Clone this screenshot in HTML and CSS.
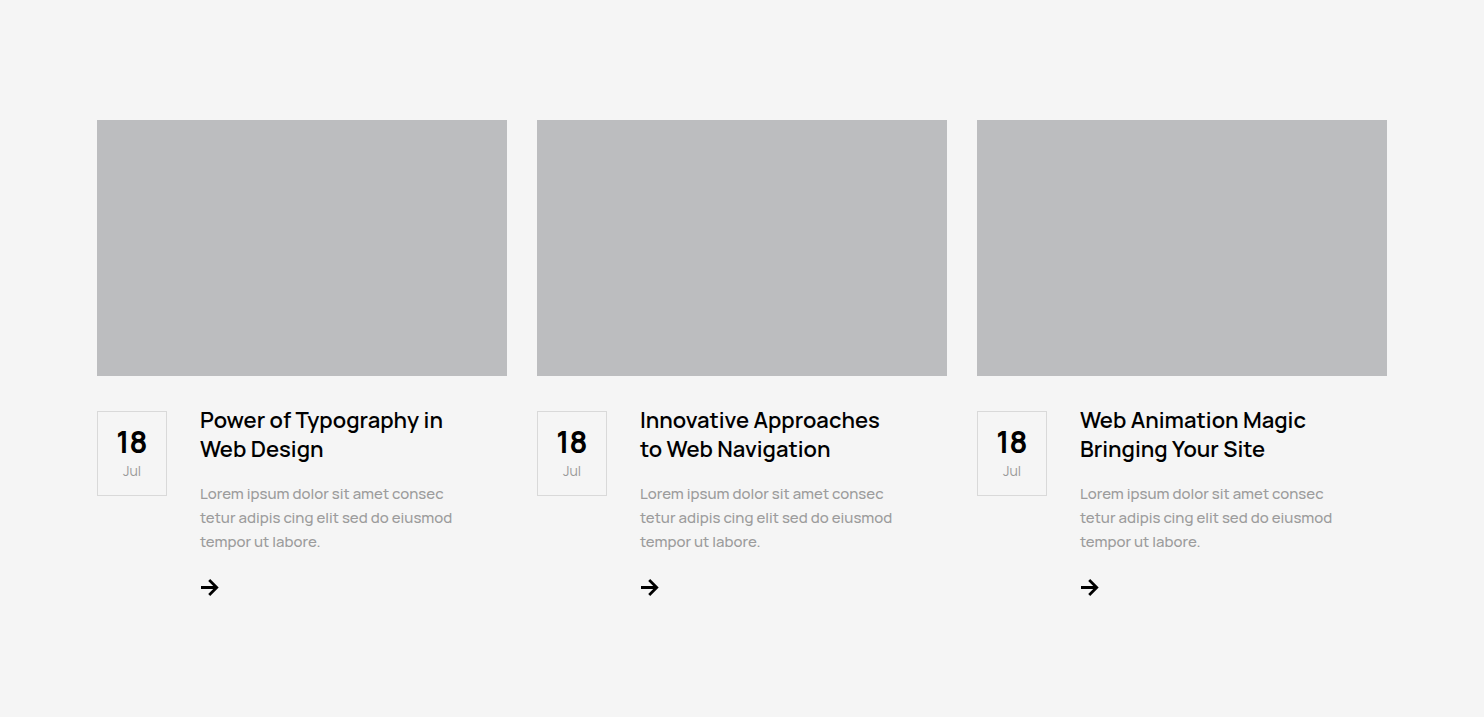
FILE: index.html
```html
<!DOCTYPE html>
<html lang="en">
<head>
<meta charset="utf-8">
<meta name="viewport" content="width=device-width, initial-scale=1">
<title>Latest posts</title>
<link rel="stylesheet" href="styles.css">
</head>
<body>
<main class="posts">
  <article class="post">
    <div class="post-image"></div>
    <div class="post-body">
      <time class="post-date" datetime="07-18"><span class="post-day">18</span><span class="post-month">Jul</span></time>
      <div class="post-text">
        <h2 class="post-title">Power of Typography in Web Design</h2>
        <p class="post-excerpt">Lorem ipsum dolor sit amet consec tetur adipis cing elit sed do eiusmod tempor ut labore.</p>
        <a class="post-link" href="#" aria-label="Read Power of Typography in Web Design"><svg class="arrow" viewBox="0 0 20 20" aria-hidden="true"><path d="M1 10.5h16M9.2 3l7.5 7.5-7.5 7.5"/></svg></a>
      </div>
    </div>
  </article>
  <article class="post">
    <div class="post-image"></div>
    <div class="post-body">
      <time class="post-date" datetime="07-18"><span class="post-day">18</span><span class="post-month">Jul</span></time>
      <div class="post-text">
        <h2 class="post-title">Innovative Approaches to Web Navigation</h2>
        <p class="post-excerpt">Lorem ipsum dolor sit amet consec tetur adipis cing elit sed do eiusmod tempor ut labore.</p>
        <a class="post-link" href="#" aria-label="Read Innovative Approaches to Web Navigation"><svg class="arrow" viewBox="0 0 20 20" aria-hidden="true"><path d="M1 10.5h16M9.2 3l7.5 7.5-7.5 7.5"/></svg></a>
      </div>
    </div>
  </article>
  <article class="post">
    <div class="post-image"></div>
    <div class="post-body">
      <time class="post-date" datetime="07-18"><span class="post-day">18</span><span class="post-month">Jul</span></time>
      <div class="post-text">
        <h2 class="post-title">Web Animation Magic Bringing Your Site</h2>
        <p class="post-excerpt">Lorem ipsum dolor sit amet consec tetur adipis cing elit sed do eiusmod tempor ut labore.</p>
        <a class="post-link" href="#" aria-label="Read Web Animation Magic Bringing Your Site"><svg class="arrow" viewBox="0 0 20 20" aria-hidden="true"><path d="M1 10.5h16M9.2 3l7.5 7.5-7.5 7.5"/></svg></a>
      </div>
    </div>
  </article>
</main>
</body>
</html>
```

FILE: styles.css
```css
* {
  box-sizing: border-box;
}

body {
  margin: 0;
  background: #f5f5f5;
  color: #000;
  font-family: Manrope, Inter, "Liberation Sans", sans-serif;
}

.posts {
  display: grid;
  grid-template-columns: repeat(auto-fit, minmax(340px, 1fr));
  gap: 30px;
  max-width: 1320px;
  margin: 0 auto;
  padding: 120px 15px;
}

.post-image {
  aspect-ratio: 410 / 256;
  background: #bcbdbf;
}

.post-body {
  display: flex;
  align-items: flex-start;
  gap: 33px;
  padding-top: 35px;
}

.post-date {
  display: flex;
  flex: none;
  flex-direction: column;
  align-items: center;
  gap: 2px;
  width: 70px;
  padding: 14px 0 12px;
  border: 1px solid #d9d9d9;
}

.post-day {
  font-size: 30px;
  font-weight: 700;
  line-height: 31px;
}

.post-month {
  color: #999;
  font-size: 14px;
  line-height: 24px;
}

.post-text {
  flex: 1;
  padding-right: 45px;
}

.post-title {
  margin: -5px 0 18px;
  font-size: 22px;
  font-weight: 650;
  line-height: 29px;
}

.post-excerpt {
  margin: 0 0 23px;
  color: #9c9c9c;
  font-size: 15px;
  font-weight: 500;
  line-height: 24px;
}

.post-link {
  display: inline-block;
  color: inherit;
}

.arrow {
  display: block;
  width: 20px;
  height: 20px;
  fill: none;
  stroke: currentColor;
  stroke-width: 2.8;
}
```
